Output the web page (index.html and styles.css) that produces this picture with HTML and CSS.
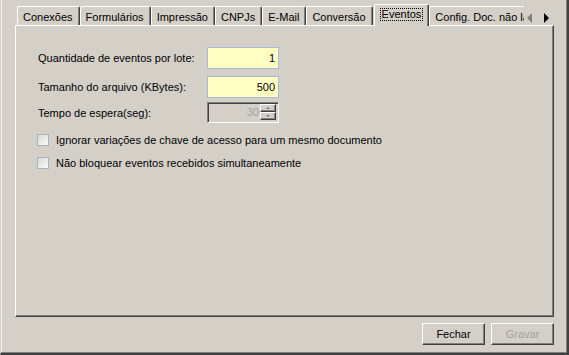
FILE: index.html
```html
<!DOCTYPE html>
<html lang="pt">
<head>
<meta charset="utf-8">
<title>Configurações - Eventos</title>
<link rel="stylesheet" href="styles.css">
</head>
<body>
<div class="window">
  <div class="tabbar">
    <div class="tabs">
      <div class="tab">Conexões</div>
      <div class="tab">Formulários</div>
      <div class="tab">Impressão</div>
      <div class="tab">CNPJs</div>
      <div class="tab">E-Mail</div>
      <div class="tab">Conversão</div>
      <div class="tab active"><span class="focus">Eventos</span></div>
      <div class="tab clipped">Config. Doc. não lançados</div>
    </div>
    <div class="scroller">
      <svg width="30" height="21" viewBox="0 0 30 21" aria-hidden="true">
        <polygon points="3,14 8,9 8,19" fill="#808080"/>
        <polygon points="20,9 25,14 20,19" fill="#000"/>
      </svg>
    </div>
  </div>
  <div class="panel">
    <div class="row first">
      <label class="lbl">Quantidade de eventos por lote:</label>
      <div class="field">1</div>
    </div>
    <div class="row second">
      <label class="lbl">Tamanho do arquivo (KBytes):</label>
      <div class="field">500</div>
    </div>
    <div class="row third">
      <label class="lbl">Tempo de espera(seg):</label>
      <div class="spinbox">
        <span class="spinval">30</span>
        <div class="spinbtns">
          <div class="spinbtn up"><span class="arr-up"></span></div>
          <div class="spinbtn down"><span class="arr-down"></span></div>
        </div>
      </div>
    </div>
    <div class="check c1"><span class="box"></span><span class="ctext">Ignorar variações de chave de acesso para um mesmo documento</span></div>
    <div class="check c2"><span class="box"></span><span class="ctext">Não bloquear eventos recebidos simultaneamente</span></div>
  </div>
  <div class="buttons">
    <button class="btn">Fechar</button>
    <button class="btn disabled">Gravar</button>
  </div>
</div>
</body>
</html>
```
FILE: styles.css
```css
* { box-sizing: border-box; }
html, body { margin: 0; padding: 0; }
body {
  width: 569px;
  height: 355px;
  background: #d4d0c8;
  font-family: "Liberation Sans", Arial, sans-serif;
  font-size: 11px;
  color: #000;
  overflow: hidden;
}
.window {
  width: 569px;
  height: 355px;
  display: flex;
  flex-direction: column;
  padding: 4px 13px 0 14px;
  border-left: 1px solid #d4d0c8;
  border-right: 2px solid #404040;
  border-bottom: 2px solid #404040;
  box-shadow: inset -1px -1px 0 #808080, inset 1px 0 0 #f4f3f0;
}
.tabbar {
  display: flex;
  height: 21px;
  flex: 0 0 auto;
}
.tabs {
  flex: 1 1 auto;
  min-width: 0;
  display: flex;
  align-items: flex-end;
  padding-left: 2px;
}
.tab {
  flex: 0 0 auto;
  height: 19px;
  padding: 3px 6px 0 5px;
  line-height: 14px;
  white-space: nowrap;
  border-top: 1px solid #fff;
  border-left: 1px solid #fff;
  border-right: 1px solid #404040;
  box-shadow: inset -1px 0 0 #808080;
  border-top-left-radius: 2px;
  border-top-right-radius: 2px;
  background: #d4d0c8;
}
.tab.active {
  height: 22px;
  margin-bottom: -1px;
  margin-left: 1px;
  padding: 2px 6px 0 6px;
  position: relative;
  z-index: 1;
}
.focus {
  display: inline-block;
  line-height: 11px;
  padding: 0 1px;
  outline: 1px dotted #000;
}
.tab.clipped {
  flex: 1 1 0;
  min-width: 0;
  overflow: hidden;
  border-right: none;
  box-shadow: none;
  border-top-right-radius: 0;
}
.scroller {
  flex: 0 0 30px;
  width: 30px;
}
.scroller svg { display: block; }

.panel {
  flex: 0 0 auto;
  height: 292px;
  border-top: 1px solid #fff;
  border-left: 1px solid #fff;
  border-right: 1px solid #404040;
  border-bottom: 1px solid #404040;
  box-shadow: inset -1px -1px 0 #808080;
  padding: 21px 0 0 22px;
  display: flex;
  flex-direction: column;
}
.row {
  display: flex;
  align-items: center;
  height: 22px;
}
.row.second { margin-top: 7px; }
.row.third { margin-top: 4px; height: 21px; }
.lbl { width: 169px; flex: 0 0 169px; white-space: nowrap; }
.field {
  width: 72px;
  height: 22px;
  border: 1px solid #a7bbd7;
  background: #ffffc4;
  text-align: right;
  padding-right: 3px;
  line-height: 20px;
}
.spinbox {
  width: 72px;
  height: 21px;
  display: flex;
  justify-content: flex-end;
  border: 1px solid;
  border-color: #808080 #fff #fff #808080;
  box-shadow: inset 1px 1px 0 #404040, inset -1px -1px 0 #d4d0c8;
  padding: 1px 2px 2px 1px;
}
.spinval {
  color: #a3a19c;
  line-height: 17px;
  padding-right: 1px;
}
.spinbtns {
  width: 16px;
  display: flex;
  flex-direction: column;
}
.spinbtn {
  flex: 1 1 0;
  display: flex;
  align-items: center;
  justify-content: center;
  border: 1px solid;
  border-color: #fff #404040 #404040 #fff;
  box-shadow: inset -1px -1px 0 #808080;
  background: #d4d0c8;
}
.arr-up, .arr-down {
  width: 0;
  height: 0;
  border-left: 2px solid transparent;
  border-right: 2px solid transparent;
}
.arr-up { border-bottom: 2px solid #808080; }
.arr-down { border-top: 2px solid #808080; }

.check {
  display: flex;
  align-items: center;
  height: 13px;
  margin-left: -1px;
  white-space: nowrap;
}
.check.c1 { margin-top: 10px; }
.check.c2 { margin-top: 10px; }
.box {
  width: 12px;
  height: 12px;
  flex: 0 0 12px;
  border: 1px solid #a4b3cb;
  background: linear-gradient(135deg, #d9d7d0 0%, #ecebe7 55%, #fbfbfa 100%);
  margin-right: 7px;
}

.buttons {
  display: flex;
  justify-content: flex-end;
  gap: 6px;
  margin-top: 6px;
}
.btn {
  width: 63px;
  height: 22px;
  padding: 0;
  margin: 0;
  font-family: "Liberation Sans", Arial, sans-serif;
  font-size: 11px;
  color: #000;
  background: #d4d0c8;
  border: 1px solid;
  border-color: #fff #404040 #404040 #fff;
  box-shadow: inset -1px -1px 0 #808080;
  border-radius: 0;
}
.btn.disabled { color: #a3a19c; }
```
